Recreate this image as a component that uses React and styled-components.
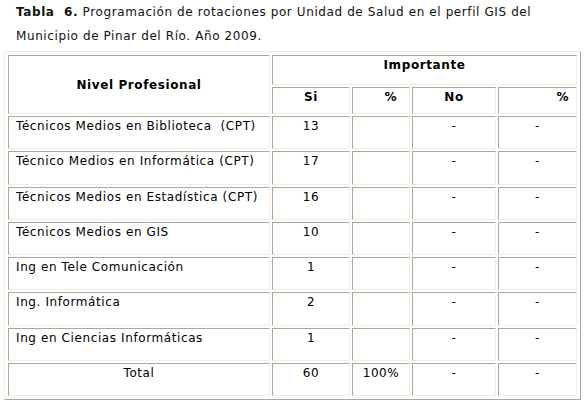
import styled, { createGlobalStyle } from "styled-components";

const Global = createGlobalStyle`
  body {
    margin: 0;
    background: #fff;
  }
`;

const Page = styled.div`
  padding: 0 0 0 4px;
  font-family: "DejaVu Sans", Verdana, sans-serif;
  font-size: 12px;
  letter-spacing: 0.6px;
  color: #000;
`;

const Caption = styled.p`
  margin: 0 0 3px;
  padding-left: 12px;
  line-height: 24px;
  color: #111;
`;

const Table = styled.table`
  border-collapse: separate;
  border-spacing: 2px;
  padding: 1px;
  width: 577px;
  table-layout: fixed;
  border: 1px solid;
  border-color: #f1efe2 #aca899 #aca899 #f1efe2;
`;

const Col = styled.col`
  width: ${(p) => p.$w}px;
`;

const Row = styled.tr`
  height: ${(p) => p.$h}px;
`;

const Cell = styled.td`
  border: 1px solid;
  border-color: #aca899 #f1efe2 #f1efe2 #aca899;
  padding: 1px 7px;
  padding-right: ${(p) => (p.$pr != null ? p.$pr : 7)}px;
  vertical-align: ${(p) => p.$valign || "top"};
  text-align: ${(p) => p.$align || "center"};
  line-height: 16px;
  white-space: nowrap;
`;

const Head = styled(Cell).attrs({ as: "th" })`
  font-weight: bold;
`;

const rows = [
  ["Técnicos Medios en Biblioteca\u00a0 (CPT)", "13"],
  ["Técnico Medios en Informática (CPT)", "17"],
  ["Técnicos Medios en Estadística (CPT)", "16"],
  ["Técnicos Medios en GIS", "10"],
  ["Ing en Tele Comunicación", "1"],
  ["Ing. Informática", "2"],
  ["Ing en Ciencias Informáticas", "1"],
];

export default function App() {
  return (
    <Page>
      <Global />
      <Caption>
        <b>Tabla&nbsp; 6.</b> Programación de rotaciones por Unidad de Salud en el perfil GIS del
        <br />
        Municipio de Pinar del Río. Año 2009.
      </Caption>
      <Table>
        <colgroup>
          <Col $w={262} />
          <Col $w={78} />
          <Col $w={58} />
          <Col $w={84} />
          <Col $w={79} />
        </colgroup>
        <tbody>
          <Row $h={30}>
            <Head rowSpan={2} $valign="middle">Nivel Profesional</Head>
            <Head colSpan={4}>Importante</Head>
          </Row>
          <Row $h={27}>
            <Head>Si</Head>
            <Head $align="right" $pr={12}>%</Head>
            <Head>No</Head>
            <Head $align="right">%</Head>
          </Row>
          {rows.map(([name, si]) => (
            <Row $h={33.25} key={name}>
              <Cell $align="left">{name}</Cell>
              <Cell>{si}</Cell>
              <Cell />
              <Cell>-</Cell>
              <Cell>-</Cell>
            </Row>
          ))}
          <Row $h={33.25}>
            <Cell>Total</Cell>
            <Cell>60</Cell>
            <Cell>100%</Cell>
            <Cell>-</Cell>
            <Cell>-</Cell>
          </Row>
        </tbody>
      </Table>
    </Page>
  );
}
